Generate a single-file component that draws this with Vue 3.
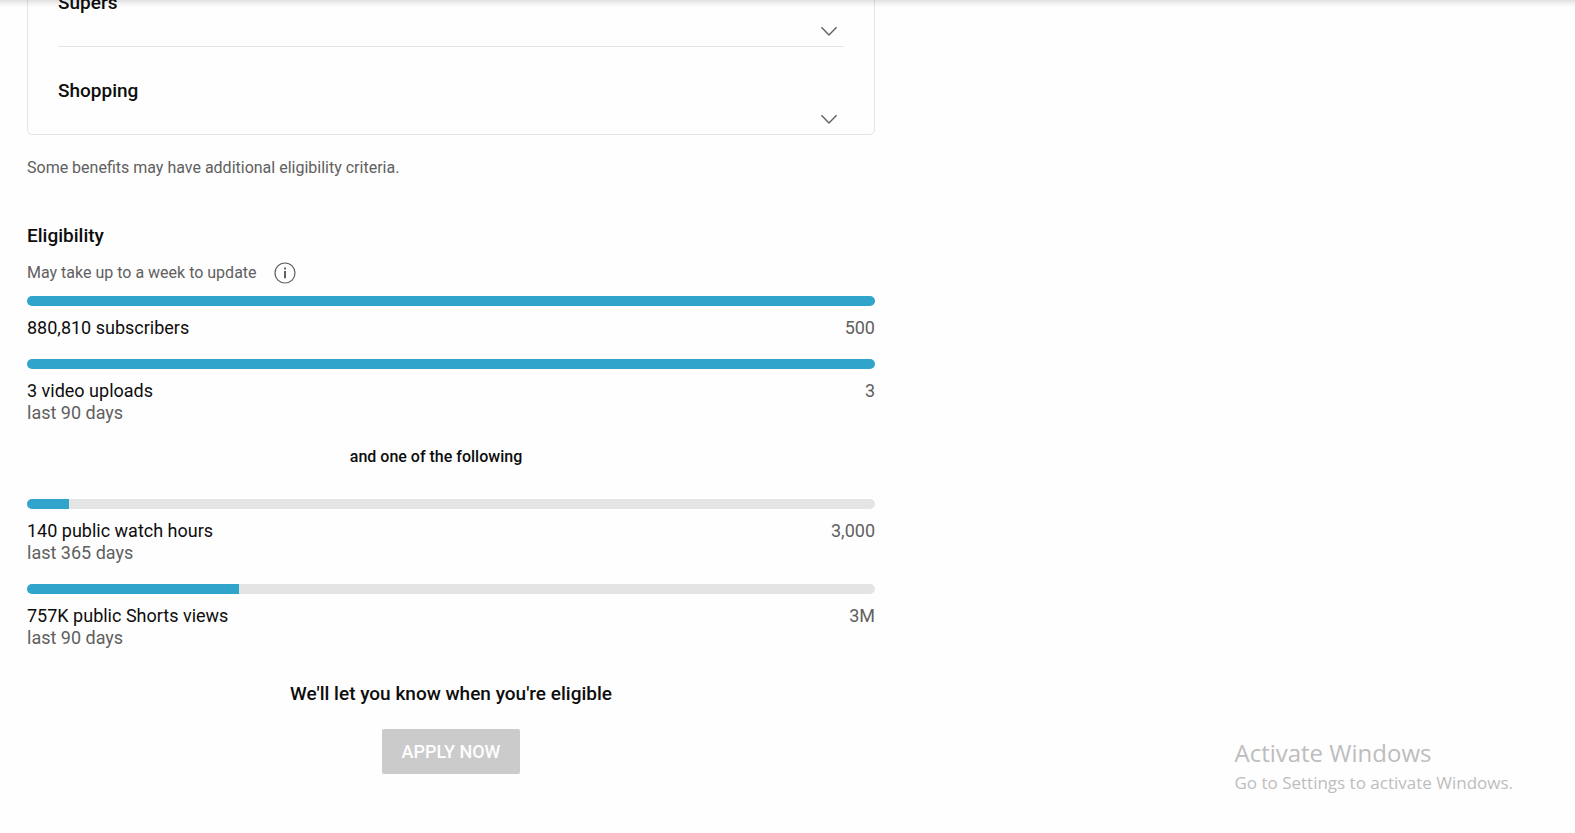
<script setup>
const benefits = ['Supers', 'Shopping']

const required = [
  { label: '880,810 subscribers', period: '', goal: '500', percent: 100 },
  { label: '3 video uploads', period: 'last 90 days', goal: '3', percent: 100 },
]

const alternatives = [
  { label: '140 public watch hours', period: 'last 365 days', goal: '3,000', percent: 5 },
  { label: '757K public Shorts views', period: 'last 90 days', goal: '3M', percent: 25 },
]

const groups = [required, alternatives]
</script>

<template>
  <div class="page">
    <div class="header-shadow"></div>
    <main class="content">
      <section class="benefits">
        <button v-for="name in benefits" :key="name" class="benefit" type="button" aria-expanded="false">
          <span class="benefit-name">{{ name }}</span>
          <svg class="chevron" viewBox="0 0 30 30" aria-hidden="true">
            <path d="M7.4 11.3 15 18.9l7.6-7.6" />
          </svg>
        </button>
      </section>
      <p class="note">Some benefits may have additional eligibility criteria.</p>

      <section class="eligibility">
        <h2 class="heading">Eligibility</h2>
        <div class="update">
          <span>May take up to a week to update</span>
          <button class="info" type="button" aria-label="More information">
            <svg viewBox="0 0 22 22" aria-hidden="true">
              <circle cx="11" cy="11" r="10" fill="none" stroke="#606060" stroke-width="1.2" />
              <path d="M10 5.4h2v2h-2zM10 9h2v7.2h-2z" fill="#606060" />
            </svg>
          </button>
        </div>

        <template v-for="(group, index) in groups" :key="index">
          <p v-if="index > 0" class="separator">and one of the following</p>
          <div class="goals">
            <div v-for="item in group" :key="item.label" class="goal">
              <div
                class="track"
                role="progressbar"
                :aria-label="item.label"
                :aria-valuenow="item.percent"
                aria-valuemin="0"
                aria-valuemax="100"
              >
                <div class="fill" :style="{ width: item.percent + '%' }"></div>
              </div>
              <div class="goal-row">
                <span>{{ item.label }}</span>
                <span class="muted">{{ item.goal }}</span>
              </div>
              <div v-if="item.period" class="muted">{{ item.period }}</div>
            </div>
          </div>
        </template>
      </section>

      <section class="apply">
        <p class="heading">We'll let you know when you're eligible</p>
        <button class="apply-button" type="button" disabled>APPLY NOW</button>
      </section>
    </main>

    <aside class="watermark">
      <div class="watermark-title">Activate Windows</div>
      <div class="watermark-text">Go to Settings to activate Windows.</div>
    </aside>
  </div>
</template>

<style>
body {
  margin: 0;
  background: #fefefe;
}
</style>

<style scoped>
.page {
  position: relative;
  min-height: 100vh;
  overflow: hidden;
  box-sizing: border-box;
  padding: 0 27px;
  font-family: Roboto, "Liberation Sans", sans-serif;
  font-size: 18px;
  line-height: 22px;
  color: #0d0d0d;
}

.header-shadow {
  position: absolute;
  top: 0;
  left: 0;
  right: 0;
  height: 8px;
  background: linear-gradient(rgba(0, 0, 0, 0.12), rgba(0, 0, 0, 0.04) 50%, transparent);
}

.content {
  max-width: 848px;
  /* the list is scrolled part of the way under the header */
  margin-top: -42px;
}

p,
h2 {
  margin: 0;
}

button {
  border: 0;
  padding: 0;
  background: none;
  font: inherit;
  color: inherit;
}

.benefits {
  border: 1px solid #e4e4e4;
  border-radius: 5px;
  padding: 0 30px;
}

.benefit {
  display: flex;
  align-items: center;
  justify-content: space-between;
  width: 100%;
  height: 87px;
  cursor: pointer;
}

.benefit + .benefit {
  border-top: 1px solid #e4e4e4;
  height: 88px;
}

.benefit-name,
.heading {
  font-size: 19px;
  font-weight: 500;
  line-height: 22px;
}

.chevron {
  align-self: flex-end;
  width: 30px;
  height: 30px;
  fill: none;
  stroke: #606060;
  stroke-width: 1.4;
}

.note {
  margin-top: 22px;
  margin-bottom: 46px;
  font-size: 16px;
  color: #606060;
}

.update {
  display: flex;
  align-items: center;
  gap: 17px;
  margin-top: 15px;
  margin-bottom: 12px;
  font-size: 16px;
  color: #606060;
}

.info,
.info svg {
  display: block;
  width: 22px;
  height: 22px;
}

.goals {
  display: grid;
  gap: 20px;
}

.track {
  height: 10px;
  margin-bottom: 11px;
  border-radius: 5px;
  overflow: hidden;
  background: #e4e4e4;
}

.fill {
  height: 100%;
  background: #30a4cb;
}

.goal-row {
  display: flex;
  justify-content: space-between;
}

.muted {
  color: #606060;
}

.separator {
  margin: 22px 0 31px;
  padding-right: 30px;
  font-size: 16px;
  font-weight: 500;
  text-align: center;
}

.apply {
  display: flex;
  flex-direction: column;
  align-items: center;
  gap: 24px;
  margin-top: 34px;
}

.apply-button {
  padding: 0 20px;
  height: 45px;
  border-radius: 2px;
  background: #cbcbcb;
  color: #fefefe;
  font-weight: 500;
}

.watermark {
  position: absolute;
  right: 62px;
  bottom: 38px;
  font-family: "Open Sans", "Noto Sans", sans-serif;
  color: #bdbdbd;
}

.watermark-title {
  font-size: 24px;
  line-height: 34px;
}

.watermark-text {
  font-size: 17px;
  line-height: 25px;
}
</style>
